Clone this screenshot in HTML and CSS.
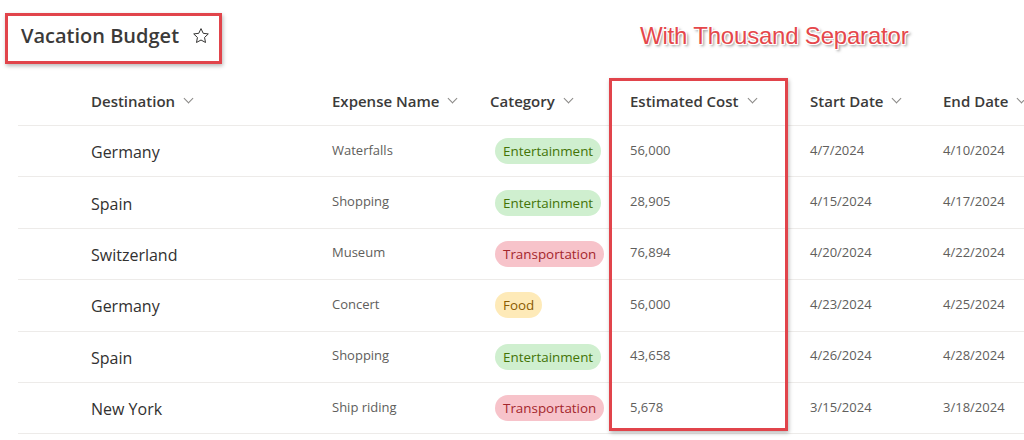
FILE: index.html
```html
<!DOCTYPE html>
<html lang="en">
<head>
<meta charset="utf-8">
<title>Vacation Budget</title>
<link rel="stylesheet" href="styles.css">
</head>
<body>
<div class="page">
  <div class="title-box">
    <h1 class="title">Vacation Budget</h1>
    <svg class="star" width="18" height="18" viewBox="0 0 20 20" aria-hidden="true"><path d="M10 1.8l2.45 5.2 5.65.7-4.15 3.9 1.05 5.6L10 14.45 5 17.2l1.05-5.6L1.9 7.7l5.65-.7z" fill="none" stroke="#323130" stroke-width="1.1" stroke-linejoin="round"/></svg>
  </div>
  <div class="note">With Thousand Separator</div>
  <div class="highlight"></div>
  <div class="list">
    <div class="row head">
      <div class="hc">Destination <span class="chev"></span></div>
      <div class="hc">Expense Name <span class="chev"></span></div>
      <div class="hc">Category <span class="chev"></span></div>
      <div class="hc">Estimated Cost <span class="chev"></span></div>
      <div class="hc">Start Date <span class="chev"></span></div>
      <div class="hc">End Date <span class="chev"></span></div>
    </div>
    <div class="row">
      <div class="dest">Germany</div><div class="small">Waterfalls</div>
      <div><span class="pill green">Entertainment</span></div>
      <div class="small">56,000</div><div class="small">4/7/2024</div><div class="small">4/10/2024</div>
    </div>
    <div class="row">
      <div class="dest">Spain</div><div class="small">Shopping</div>
      <div><span class="pill green">Entertainment</span></div>
      <div class="small">28,905</div><div class="small">4/15/2024</div><div class="small">4/17/2024</div>
    </div>
    <div class="row">
      <div class="dest">Switzerland</div><div class="small">Museum</div>
      <div><span class="pill red">Transportation</span></div>
      <div class="small">76,894</div><div class="small">4/20/2024</div><div class="small">4/22/2024</div>
    </div>
    <div class="row">
      <div class="dest">Germany</div><div class="small">Concert</div>
      <div><span class="pill yellow">Food</span></div>
      <div class="small">56,000</div><div class="small">4/23/2024</div><div class="small">4/25/2024</div>
    </div>
    <div class="row">
      <div class="dest">Spain</div><div class="small">Shopping</div>
      <div><span class="pill green">Entertainment</span></div>
      <div class="small">43,658</div><div class="small">4/26/2024</div><div class="small">4/28/2024</div>
    </div>
    <div class="row">
      <div class="dest">New York</div><div class="small">Ship riding</div>
      <div><span class="pill red">Transportation</span></div>
      <div class="small">5,678</div><div class="small">3/15/2024</div><div class="small">3/18/2024</div>
    </div>
  </div>
</div>
</body>
</html>
```

FILE: styles.css
```css
* { box-sizing: border-box; }
html, body { margin: 0; padding: 0; background: #fff; }
body {
  font-family: "Open Sans", "Noto Sans", sans-serif;
  color: #323130;
  width: 1024px;
  height: 440px;
  overflow: hidden;
}
.page {
  position: relative;
  padding-top: 13px;
}
.title-box {
  display: inline-flex;
  align-items: center;
  gap: 13px;
  margin-left: 5px;
  width: 217px;
  height: 51px;
  padding: 0 0 6px 13px;
  border: 3px solid #e1444b;
  box-shadow: 1px 2px 4px rgba(0,0,0,0.28);
}
.title {
  margin: 0;
  font-size: 20px;
  font-weight: 600;
  letter-spacing: 0;
  color: #3b3a39;
}
.star { display: block; margin-top: 1px; }
.note {
  position: absolute;
  left: 640px;
  top: 22px;
  font-family: "Liberation Sans", Arial, sans-serif;
  font-size: 24px;
  color: #e5474b;
  letter-spacing: -0.2px;
  text-shadow: -1px -1px 0 #fff, 1px -1px 0 #fff, -1px 1px 0 #fff, 1px 1px 0 #fff, 2px 2px 3px rgba(0,0,0,0.5);
}
.highlight {
  position: absolute;
  left: 609px;
  top: 78px;
  width: 179px;
  height: 353px;
  border: 3px solid #e1444b;
  box-shadow: 1px 2px 4px rgba(0,0,0,0.28);
  z-index: 2;
  pointer-events: none;
}
.list {
  margin-left: 18px;
  margin-top: 12px;
}
.row {
  display: grid;
  grid-template-columns: 241px 158px 140px 180px 133px 1fr;
  align-items: center;
  padding-left: 73px;
  height: 51.4px;
  border-bottom: 1px solid #edebe9;
  white-space: nowrap;
}
.row.head { height: 50px; }
.hc {
  font-size: 15px;
  font-weight: 600;
  color: #3b3a39;
  display: flex;
  align-items: center;
  gap: 10px;
}
.chev {
  width: 7px;
  height: 7px;
  border-right: 1px solid #8a8886;
  border-bottom: 1px solid #8a8886;
  transform: rotate(45deg);
  margin-top: -5px;
}
.dest {
  font-size: 16px;
  color: #323130;
  padding-top: 2px;
}
.small {
  font-size: 13px;
  color: #605e5c;
  margin-top: -3px;
}
.pill {
  display: inline-block;
  margin-left: 5px;
  height: 26px;
  line-height: 26px;
  padding: 0 8px;
  border-radius: 13px;
  font-size: 13.4px;
}
.green { background: #cfefcf; color: #437406; }
.red { background: #f7c3ca; color: #a4262c; }
.yellow { background: #feeab8; color: #8a5c00; }
```
